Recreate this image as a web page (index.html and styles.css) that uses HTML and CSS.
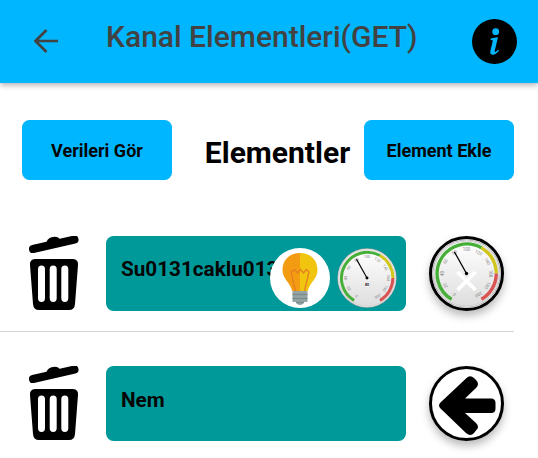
FILE: index.html
```html
<!DOCTYPE html>
<html lang="tr">
<head>
<meta charset="utf-8">
<title>Kanal Elementleri</title>
<link rel="stylesheet" href="styles.css">
</head>
<body>
<svg class="defs" width="0" height="0" aria-hidden="true">
  <defs>
    <linearGradient id="dial" x1="0" y1="0" x2="0" y2="1"><stop offset="0" stop-color="#fff"/><stop offset="1" stop-color="#dedede"/></linearGradient>
    <symbol id="gauge" viewBox="-35 -35 70 70">
      <circle r="34.6" fill="#999"/>
      <circle r="34" fill="#e8e8e8"/>
      <circle r="32.8" fill="url(#dial)" stroke="#c4c4c4" stroke-width=".6"/>
      <g fill="none" stroke-width="3.4">
        <path stroke="#45af38" d="M-15.1 26.15A30.2 30.2 0 0 1 15.1-26.15"/>
        <path stroke="#cfc51b" d="M15.1-26.15A30.2 30.2 0 0 1 30.2 0"/>
        <path stroke="#d95353" d="M30.2 0A30.2 30.2 0 0 1 15.1 26.15"/>
      </g>
      <g class="dial-label">
        <text transform="rotate(210) translate(0 -23)">0</text>
        <text transform="rotate(240) translate(0 -23)">20</text>
        <text transform="rotate(270) translate(0 -23)">40</text>
        <text transform="rotate(300) translate(0 -23)">60</text>
        <text transform="rotate(330) translate(0 -23)">80</text>
        <text transform="translate(0 -23)">100</text>
        <text transform="rotate(30) translate(0 -23)">120</text>
        <text transform="rotate(60) translate(0 -23)">140</text>
        <text transform="rotate(90) translate(0 -23)">160</text>
        <text transform="rotate(120) translate(0 -23)">180</text>
        <text transform="rotate(150) translate(0 -23)">200</text>
      </g>
      <path d="M0 0L-12.3-22" stroke="#000" stroke-width="1.3"/>
      <circle r="1.7"/>
    </symbol>
    <symbol id="trash" viewBox="0 0 50 76">
      <path d="M4 13L45.500 3.500" stroke="#000" stroke-width="8" stroke-linecap="round" fill="none"/>
      <path d="M17 8.500Q17.500 2.500 22.500 1.300Q29 -.5 31.500 4.300V9L18 12z"/>
      <path fill-rule="evenodd" d="M6 23H44Q49.500 23.500 49 29L46 68Q45.500 74 40 74H10Q4.500 74 4 68L1 29Q.5 23.500 6 23zM12.500 29.500Q9 29.500 9 33V62Q9 66 12.500 66Q16 66 16 62V33Q16 29.500 12.500 29.500zM24.200 29.500Q20.700 29.500 20.700 33V62Q20.700 66 24.200 66Q27.700 66 27.700 62V33Q27.700 29.500 24.200 29.500zM35.800 29.500Q32.300 29.500 32.300 33V62Q32.300 66 35.800 66Q39.300 66 39.300 62V33Q39.300 29.500 35.800 29.500z"/>
    </symbol>
  </defs>
</svg>
<header class="bar">
  <svg class="back" width="24" height="24" viewBox="0 0 24 24"><path d="M24 12H2M12.500 1L1.500 12L12.500 23" fill="none" stroke="#424242" stroke-width="2.700"/></svg>
  <h1 class="title">Kanal Elementleri(GET)</h1>
  <svg class="info" width="45" height="45" viewBox="0 0 45 45">
    <circle cx="22.500" cy="22.500" r="22.500"/>
    <g fill="#00b7ff"><circle cx="23.700" cy="12.700" r="3.400"/><path d="M18.700 19.500Q22.500 18.700 26 18.300L22.800 31.500Q22.400 33.500 23.800 32.800L26.300 30.700L27 31.700Q23.500 36 20.300 35.700Q17.600 35.300 18.500 31.500L20.700 22.500Q21.200 20.700 18.500 20.700z"/></g>
  </svg>
</header>
<main>
  <div class="actions">
    <button class="button">Verileri Gör</button>
    <h2 class="heading">Elementler</h2>
    <button class="button">Element Ekle</button>
  </div>
  <ul class="list">
    <li class="row">
      <svg class="trash"><use href="#trash"/></svg>
      <div class="card">Su0131caklu0131k
        <div class="chips">
          <svg class="chip" viewBox="0 0 60 60">
            <circle cx="30" cy="30" r="30" fill="#fff"/>
            <path d="M30 5C19 5 12.500 12.500 12.500 22C12.500 31 20 34 22.300 43H30z" fill="#f39c12"/>
            <path d="M30 5C41 5 47.500 12.500 47.500 22C47.500 31 40 34 37.700 43H30z" fill="#f1c40f"/>
            <path d="M25.500 43L21 24L24.500 21.500L27.500 25L30.500 21.500L33.500 25L36.500 21.500L39 24L34.500 43" fill="none" stroke="#e67e22" stroke-width="1.300"/>
            <path d="M22.500 43H37.500V54H34Q33 57 30 57Q27 57 26 54H22.500z" fill="#95a5a6"/>
            <path d="M22.500 46.500H37.500M22.500 50.500H37.500M26 54.500H34" stroke="#7f8c8d" stroke-width="1.500"/>
          </svg>
          <svg class="chip" viewBox="0 0 60 60">
            <use href="#gauge" width="60" height="60"/>
            <rect x="27.200" y="34.500" width="5.600" height="4.800" rx="1" fill="#fff" stroke="#ccc" stroke-width=".4"/>
            <text class="reading" x="30" y="38.300">80</text>
          </svg>
        </div>
      </div>
      <div class="round">
        <svg width="69" height="69" viewBox="0 0 69 69"><use href="#gauge" width="69" height="69"/><path d="M25.500 33L43.500 51M43.500 33L25.500 51" stroke="#fff" stroke-width="3.800"/></svg>
      </div>
    </li>
    <li class="row">
      <svg class="trash"><use href="#trash"/></svg>
      <div class="card">Nem</div>
      <div class="round">
        <svg width="69" height="69" viewBox="0 0 69 69"><path d="M8.500 33.500L34 9.500Q38 5.500 42 9L44 11Q48 15 44 19L33 29.500H59Q63.500 29.500 63.500 34V39.500Q63.500 44 59 44H33L44 54Q48 58 44 61.500L42 64Q38.500 68 34 64L8.500 39.500Q5.500 36.500 8.500 33.500z"/></svg>
      </div>
    </li>
  </ul>
</main>
</body>
</html>
```

FILE: styles.css
```css
* { box-sizing: border-box; }
body { margin: 0; width: 538px; height: 458px; overflow: hidden; background: #fff; font-family: Roboto, sans-serif; color: #050505; }
.defs { position: absolute; }
.bar { display: flex; align-items: center; height: 83px; padding: 0 21px 0 34px; background: #00b7ff; box-shadow: 0 2px 6px rgba(0,0,0,.32); }
.back { margin-bottom: 2px; }
.title { margin: 0 auto 9px 48px; font-size: 30px; line-height: 40px; font-weight: 500; color: #424242; white-space: nowrap; }
.actions { display: flex; justify-content: space-between; align-items: center; margin-top: 37.4px; padding: 0 24px 0 22px; height: 60px; }
.button { width: 150px; height: 60px; padding: 0; border: 0; border-radius: 7.5px; background: #00b7ff; color: #050505; font: 700 18px Roboto, sans-serif; }
.heading { margin: 6px -5px 0 14px; font-size: 30px; line-height: 40px; font-weight: 700; color: #000; }
.list { list-style: none; margin: 55.6px 0 0; padding: 0; }
.row { display: flex; width: 514px; height: 96px; padding-left: 29px; border-bottom: 1.5px solid #d6d6d6; margin-bottom: 34.4px; }
.row:last-child { height: 76px; border: 0; margin: 0; }
.trash { width: 50px; height: 76px; }
.card { position: relative; width: 300px; height: 75px; margin-left: 27px; padding: 20.5px 15px; border-radius: 7.5px; background: #009999; font-size: 20.7px; line-height: 27px; font-weight: 700; color: #050505; }
.chips { position: absolute; right: 9px; top: 12px; display: flex; gap: 7.5px; }
.chip { width: 60px; height: 60px; }
.round { display: flex; width: 75px; height: 75px; margin-left: 22.5px; border: 3px solid #000; border-radius: 50%; background: #fff; box-shadow: 0 5px 9px rgba(0,0,0,.27); }
.dial-label { font: 4.5px Roboto, sans-serif; fill: #888; text-anchor: middle; }
.reading { font: 700 3.5px Roboto, sans-serif; text-anchor: middle; }
```
